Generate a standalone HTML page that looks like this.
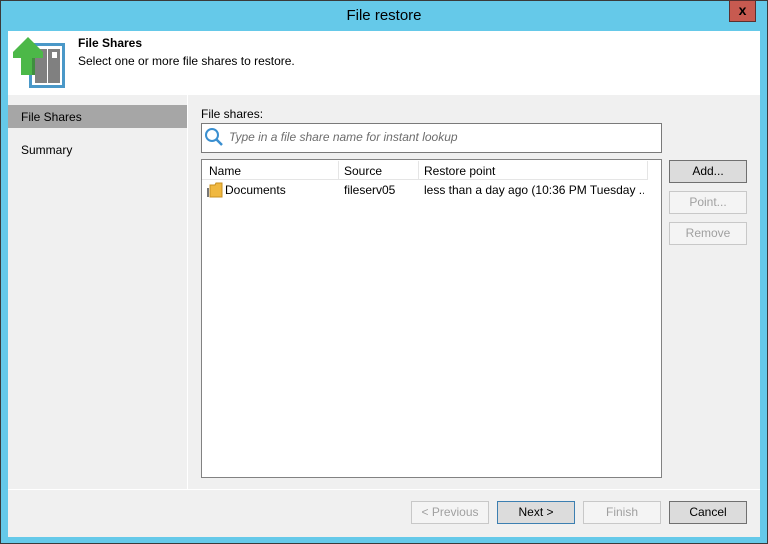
<!DOCTYPE html>
<html><head><meta charset="utf-8"><style>
*{margin:0;padding:0;box-sizing:border-box}
body{width:768px;height:544px;background:#65c9e9;position:relative;overflow:hidden;font-family:"Liberation Sans",sans-serif;font-size:12px;color:#000}
.abs{position:absolute}
.btn{position:absolute;width:78px;height:23px;border:1px solid #adadad;background:#e1e1e1;text-align:center;line-height:21px;font-size:12px}
.dis{background:#f4f4f4;border-color:#c8c8c8;color:#a0a0a0}
</style></head><body>
<div class="abs" style="left:0;top:0;width:1px;height:544px;background:#3a3a3a"></div>
<div class="abs" style="left:0;top:0;width:768px;height:1px;background:#3a3a3a"></div>
<div class="abs" style="left:767px;top:0;width:1px;height:544px;background:#3a3a3a"></div>
<div class="abs" style="left:0;top:543px;width:768px;height:1px;background:#3a3a3a"></div>
<div class="abs" style="left:0;top:7px;width:768px;text-align:center;font-size:15px;color:#000">File restore</div>
<div class="abs" style="left:729px;top:0;width:27px;height:22px;background:#c75a50;border:1px solid #5a3030;text-align:center;font-weight:bold;font-size:14px;line-height:19px">x</div>
<div class="abs" style="left:8px;top:31px;width:752px;height:506px;background:#f0f0f0"></div>
<div class="abs" style="left:8px;top:31px;width:752px;height:64px;background:#fff"></div>
<svg class="abs" style="left:0;top:0" width="80" height="95">
<rect x="30.5" y="44.5" width="33" height="42" fill="none" stroke="#4a98c8" stroke-width="3"/>
<rect x="35" y="49" width="12" height="34" fill="#808080"/>
<rect x="48" y="49" width="12" height="34" fill="#808080"/>
<rect x="52" y="52" width="5" height="6" fill="#fff"/>
<path d="M28 37 L13 52 L13 58 L21 58 L21 75 L32 75 L32 58 L43 58 L43 52 Z" fill="#4cb848"/>
<path d="M32 58 L35 58 L35 75 L32 75 Z" fill="#3f8f3f"/>
</svg>
<div class="abs" style="left:78px;top:36px;font-weight:bold;font-size:12px">File Shares</div>
<div class="abs" style="left:78px;top:54px;font-size:12px">Select one or more file shares to restore.</div>
<div class="abs" style="left:187px;top:95px;width:1px;height:394px;background:#fff"></div>
<div class="abs" style="left:8px;top:105px;width:179px;height:23px;background:#a6a6a6"></div>
<div class="abs" style="left:21px;top:110px">File Shares</div>
<div class="abs" style="left:21px;top:143px">Summary</div>
<div class="abs" style="left:201px;top:107px">File shares:</div>
<div class="abs" style="left:201px;top:123px;width:461px;height:30px;background:#fff;border:1px solid #7a7a7a"></div>
<svg class="abs" style="left:204px;top:127px" width="20" height="22"><circle cx="8" cy="8" r="6" fill="none" stroke="#3a8fd0" stroke-width="2"/><line x1="12.5" y1="12.5" x2="18" y2="18" stroke="#3a8fd0" stroke-width="2.5"/></svg>
<div class="abs" style="left:229px;top:130px;font-style:italic;color:#6d6d6d">Type in a file share name for instant lookup</div>
<div class="abs" style="left:201px;top:159px;width:461px;height:319px;background:#fff;border:1px solid #828282"></div>
<div class="abs" style="left:202px;top:160px;width:446px;height:20px;border-bottom:1px solid #e5e5e5"></div>
<div class="abs" style="left:338px;top:161px;width:1px;height:18px;background:#e5e5e5"></div>
<div class="abs" style="left:418px;top:161px;width:1px;height:18px;background:#e5e5e5"></div>
<div class="abs" style="left:647px;top:161px;width:1px;height:18px;background:#e5e5e5"></div>
<div class="abs" style="left:209px;top:164px">Name</div>
<div class="abs" style="left:344px;top:164px">Source</div>
<div class="abs" style="left:424px;top:164px">Restore point</div>
<svg class="abs" style="left:206px;top:182px" width="18" height="16"><rect x="1" y="6" width="2" height="9" fill="#777"/><path d="M4 3 L9 3 L10 1 L16 1 L16 15 L4 15 Z" fill="#f0b840" stroke="#c89020" stroke-width="1"/></svg>
<div class="abs" style="left:225px;top:183px">Documents</div>
<div class="abs" style="left:344px;top:183px">fileserv05</div>
<div class="abs" style="left:424px;top:183px;width:220px;white-space:nowrap;overflow:hidden">less than a day ago (10:36 PM Tuesday ...</div>
<div class="btn" style="left:669px;top:160px;border-color:#707070;background:#dcdcdc">Add...</div>
<div class="btn dis" style="left:669px;top:191px">Point...</div>
<div class="btn dis" style="left:669px;top:222px">Remove</div>
<div class="abs" style="left:8px;top:489px;width:752px;height:1px;background:#fff"></div>
<div class="btn dis" style="left:411px;top:501px">&lt; Previous</div>
<div class="btn" style="left:497px;top:501px;border-color:#3c7fb1;background:#dcdcdc">Next &gt;</div>
<div class="btn dis" style="left:583px;top:501px">Finish</div>
<div class="btn" style="left:669px;top:501px;border-color:#707070;background:#dcdcdc">Cancel</div>
</body></html>
